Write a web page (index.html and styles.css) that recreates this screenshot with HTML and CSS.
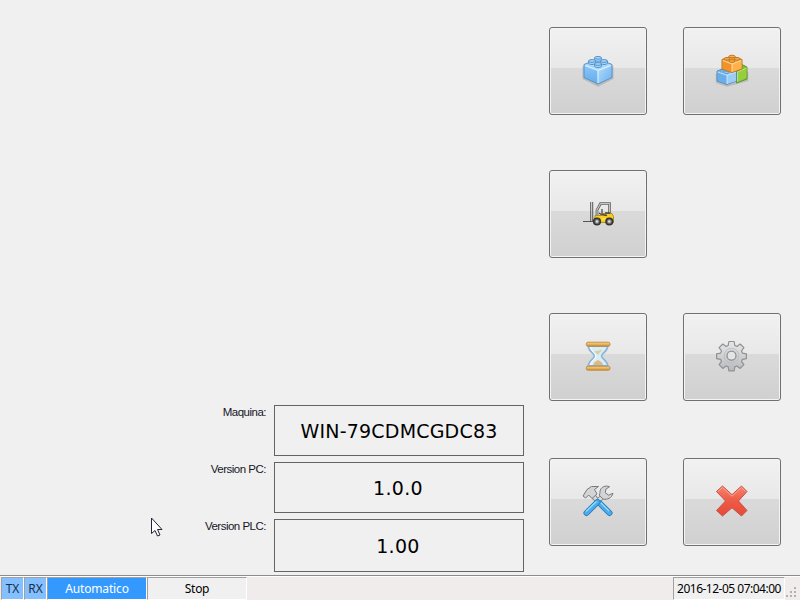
FILE: index.html
```html
<!DOCTYPE html>
<html lang="es">
<head>
<meta charset="utf-8">
<title>Panel</title>
<link rel="stylesheet" href="styles.css">
</head>
<body>
<main class="workspace">
  <section class="info">
    <div class="field"><label>Maquina:</label><div class="value machine"><span>WIN-79CDMCGDC83</span></div></div>
    <div class="field"><label>Version PC:</label><div class="value"><span>1.0.0</span></div></div>
    <div class="field tall"><label>Version PLC:</label><div class="value"><span>1.00</span></div></div>
  </section>
  <nav class="buttons">
    <button aria-label="Pieza">
      <svg viewBox="0 0 36 36">
        <defs>
          <linearGradient id="bl" x1="0" y1="0" x2="0" y2="1"><stop offset="0" stop-color="#8cc8fa"/><stop offset="1" stop-color="#62abea"/></linearGradient>
          <linearGradient id="br" x1="0" y1="0" x2="1" y2="1"><stop offset="0" stop-color="#b4ddff"/><stop offset="1" stop-color="#68b0ee"/></linearGradient>
        </defs>
        <path d="M4 13v12l14 7 14-7V13" fill="none" stroke="#777" stroke-opacity=".3" stroke-width="3"/>
        <path d="M4 11.500l14-5.500 14 5.500-14 5.500z" fill="#a9d7fc"/>
        <path d="M4 11.500l14 5.500v14L4 24.500z" fill="url(#bl)"/>
        <path d="M32 11.500l-14 5.500v14l14-6.500z" fill="url(#br)"/>
        <path d="M4 11.500l14-5.500 14 5.500v13L18 31 4 24.500z" fill="none" stroke="#5a94c4"/>
        <path d="M5 12.500l13 5 13-5M18 17.500v12.500" fill="none" stroke="#e2f4ff" stroke-width="1.100"/>
        <g fill="#a6d5fb" stroke="#4c8dc5" stroke-width=".9">
          <path d="M14.500 4.800v2c0 2 7 2 7 0v-2"/><ellipse cx="18" cy="4.800" rx="3.500" ry="1.400"/>
          <path d="M8.500 8v2c0 2 7 2 7 0V8"/><ellipse cx="12" cy="8" rx="3.500" ry="1.400"/>
          <path d="M20.500 8v2c0 2 7 2 7 0V8"/><ellipse cx="24" cy="8" rx="3.500" ry="1.400"/>
          <path d="M14.500 11v2c0 2 7 2 7 0v-2"/><ellipse cx="18" cy="11" rx="3.500" ry="1.400"/>
        </g>
      </svg>
    </button>
    <button aria-label="Piezas">
      <svg viewBox="0 0 36 36">
        <path d="M3 21v8l10 3.500L33 27v-8" fill="none" stroke="#777" stroke-opacity=".3" stroke-width="2.500"/>
        <path d="M22 16l6-4.500 5 2.500v12L22.500 30z" fill="#80bd32" stroke="#5c8e28" stroke-width=".9"/>
        <path d="M23.500 19l9-4.500v10.500l-9 4z" fill="#94cf3e"/>
        <path d="M23.500 28.500V19l9-4" fill="none" stroke="#c8ea90" stroke-width=".8"/>
        <path d="M3 18l9-3 10.500 3.500V28L13 31.500 3 28z" fill="#75b8ef" stroke="#4c88bd" stroke-width=".9"/>
        <path d="M3.500 18.500l9-3 9.500 3-9 3z" fill="#8dc6f4"/>
        <path d="M22 19l-9 3.200V31l9-3z" fill="#9bcdf7"/>
        <path d="M4 19.500l9 3v8l-9-3z" fill="#69aee9"/>
        <path d="M3.800 19l9.200 3.200 9-3.200M13 22.200V31" fill="none" stroke="#d8efff" stroke-width=".8"/>
        <g fill="#9dd1fa" stroke="#4887c0" stroke-width=".7"><ellipse cx="8" cy="18" rx="2.500" ry="1"/><ellipse cx="12.500" cy="19.600" rx="2.500" ry="1"/></g>
        <path d="M8 6.500L18 3l10 3.500V16l-10 3.500L8 16z" fill="#f3a13b" stroke="#b87528"/>
        <path d="M8.700 7.500L18 11v8l-9.300-3.500z" fill="#f1922b"/>
        <path d="M27.500 7.500L18 11v8l9.500-3.500z" fill="#ffb14c"/>
        <path d="M8.800 7.500L18 11l9.200-3.500M18 11v7.800" fill="none" stroke="#ffe0a5" stroke-width=".9"/>
        <g fill="#ffad43" stroke="#b46b1e" stroke-width=".8"><ellipse cx="18" cy="3.500" rx="3.200" ry="1.300"/><ellipse cx="13" cy="5.800" rx="3" ry="1.300"/><ellipse cx="23" cy="5.800" rx="3" ry="1.300"/><ellipse cx="18" cy="8" rx="3" ry="1.300"/></g>
      </svg>
    </button>
    <button class="lone" aria-label="Carretilla">
      <svg viewBox="0 0 36 36">
        <path d="M3 25.500h10" stroke="#555" stroke-width="1"/>
        <path d="M10.700 6v19M12.700 6v19" stroke="#555" stroke-width="1"/>
        <path d="M17 19v-5l3.500-6.500h9V18" fill="none" stroke="#666" stroke-width="2.700"/>
        <path d="M17 19v-5l3.500-6.500h9V18" fill="none" stroke="#c4c4c4" stroke-width="1.100"/>
        <path d="M22 13v5M19 17l3 2" stroke="#444" stroke-width="1.200"/>
        <path d="M15 19.500h7v-2h10l1.500 3V26.500H14.500z" fill="#f8cc20" stroke="#a3800e" stroke-width=".8"/>
        <path d="M22 18.500l5 1M25 17h5" stroke="#444" stroke-width="1.500"/>
        <path d="M22 23h4" stroke="#fff07a"/>
        <g fill="#777" stroke="#333" stroke-width="1.600"><circle cx="17" cy="25.500" r="3.300"/><circle cx="29.300" cy="25.500" r="3.300"/></g>
        <g fill="#ddd"><circle cx="17" cy="25.500" r="1.300"/><circle cx="29.300" cy="25.500" r="1.300"/></g>
      </svg>
    </button>
    <button aria-label="Tiempos">
      <svg viewBox="0 0 36 36">
        <defs><linearGradient id="gd" x1="0" y1="0" x2="0" y2="1"><stop offset="0" stop-color="#f9d68a"/><stop offset="1" stop-color="#d69436"/></linearGradient></defs>
        <path d="M8.300 7c0 5.500 6.200 7.500 6.200 10s-6.200 4.500-6.200 10h19.400c0-5.500-6.200-7.500-6.200-10s6.200-4.500 6.200-10z" fill="#d8edf8" stroke="#8db6d8" stroke-width="1.800"/>
        <path d="M10.500 8c.5 4.500 5.500 6 5.500 9s-5 4.500-5.500 9" fill="none" stroke="#fff"/>
        <path d="M14 12.500c3-1 5-.5 8-2-.5 2.500-3 3-4 5.500-1-1.500-2.500-2-4-3.500z" fill="#d8cf9d"/>
        <path d="M13.500 26c0-3 2.500-3.500 4.500-5 2 1.500 5 2 5 5z" fill="#e2b878"/>
        <rect x="6.300" y="3.200" width="23.700" height="4" rx="1.700" fill="url(#gd)" stroke="#b67c30" stroke-width=".8"/>
        <rect x="6.300" y="27.200" width="23.700" height="4" rx="1.700" fill="url(#gd)" stroke="#b67c30" stroke-width=".8"/>
      </svg>
    </button>
    <button aria-label="Ajustes">
      <svg viewBox="0 0 36 36">
        <defs><linearGradient id="gr" x1="0" y1="0" x2="0" y2="1"><stop offset="0" stop-color="#e7e7e8"/><stop offset="1" stop-color="#b8babd"/></linearGradient></defs>
        <g transform="translate(17.500 16.700)">
          <path fill="url(#gr)" stroke="#8f9194" stroke-width="1.200" stroke-linejoin="round" d="M-2.600-14.200h5.200l.7 4 2.100.9 3.300-2.400 3.700 3.700-2.400 3.300.9 2.100 4 .7v4.800l-4 .7-.9 2.100 2.400 3.300-3.700 3.700-3.300-2.400-2.100.9-.7 4h-5.200l-.7-4-2.100-.9-3.300 2.400-3.700-3.700 2.400-3.300-.9-2.100-4-.7v-4.800l4-.7.9-2.100-2.400-3.300 3.700-3.700 3.300 2.400 2.100-.9z"/>
          <circle r="7.300" fill="none" stroke="#bcbec0" stroke-width="1"/>
          <circle r="4.500" fill="#e4e4e4" stroke="#8d8f92" stroke-width="1.300"/>
        </g>
      </svg>
    </button>
    <button aria-label="Herramientas">
      <svg viewBox="0 0 36 36">
        <path d="M11.500 10l6 7M23 12l-6 6" stroke="#85888b" stroke-width="5"/>
        <path d="M11.500 10l6 7M23 12l-6 6" stroke="#d7d9da" stroke-width="3.200"/>
        <path d="M3 12l4-6.500 4.500-3H18.500l-4 3 2.500 4.500-5 4.500-3.300-3.500-3 3z" fill="#d2d4d6" stroke="#77797c"/>
        <path d="M29.500 2.700c-4-1.700-9 .3-9.500 4.700-.1 1.500 0 2.500-.7 3.800l4 4c4 .5 8.500-1 9.700-6l-4.300 2-3.400-2.400.5-3.600z" fill="#d2d4d6" stroke="#77797c"/>
        <path d="M20 19.500l9.500 9.500" stroke="#2878b4" stroke-width="6" stroke-linecap="round"/>
        <path d="M20 19.500l9.500 9.500" stroke="#49aceb" stroke-width="4.400" stroke-linecap="round"/>
        <path d="M20.500 18.500l8.500 8.500" stroke="#9bdcff" stroke-width="1.200"/>
        <path d="M6.500 29L17.500 18" stroke="#2878b4" stroke-width="6" stroke-linecap="round"/>
        <path d="M6.500 29L17.500 18" stroke="#49aceb" stroke-width="4.400" stroke-linecap="round"/>
        <path d="M6 27.500L16.500 17.500" stroke="#9bdcff" stroke-width="1.200"/>
      </svg>
    </button>
    <button aria-label="Salir">
      <svg viewBox="0 0 36 36">
        <defs><linearGradient id="rd" x1="0" y1="0" x2="0" y2="1"><stop offset="0" stop-color="#f8826e"/><stop offset=".5" stop-color="#ee5a46"/><stop offset="1" stop-color="#e54a37"/></linearGradient></defs>
        <path d="M8.500 2l9.500 8.700L27.500 2l5.500 5.500-8.500 9.500 8.500 9.500-5.500 5.500L18 23.800 8.500 32 2.500 26.500 11.500 17 2.500 7.500z" fill="url(#rd)" stroke="#c0564a" stroke-width="1" stroke-linejoin="round"/>
        <path d="M4 7.500l4.500-4 9.500 8.700 9.500-8.700 4 4" fill="none" stroke="#ffaf9d" stroke-width=".8"/>
      </svg>
    </button>
  </nav>
</main>
<footer class="status">
  <div class="cell tx"><span>TX</span></div>
  <div class="cell rx"><span>RX</span></div>
  <div class="cell mode"><span>Automatico</span></div>
  <div class="cell state"><span>Stop</span></div>
  <div class="spring"></div>
  <div class="cell clock"><span>2016-12-05 07:04:00</span></div>
  <svg class="grip" viewBox="0 0 12 12"><path d="M8 0h2v2H8zM4 4h2v2H4zM8 4h2v2H8zM0 8h2v2H0zM4 8h2v2H4zM8 8h2v2H8z" fill="#b3b1b1"/></svg>
</footer>
<svg class="cursor" viewBox="0 0 13 20"><path d="M1.500 1v15.500l3.500-3 2.500 5.500 2.500-1-2.500-5.500h4.500z" fill="#fff" stroke="#222435"/></svg>
</body>
</html>
```
FILE: styles.css
```css
* { box-sizing: border-box; }
body {
  margin: 0;
  width: 800px;
  height: 600px;
  overflow: hidden;
  display: flex;
  flex-direction: column;
  background: #f0f0f0;
  color: #000;
  font-family: "Noto Sans", sans-serif;
}
.workspace {
  flex: 1;
  display: flex;
  justify-content: space-between;
  padding: 27px 19px 3px 0;
}
.info {
  width: 524px;
  display: flex;
  flex-direction: column;
  justify-content: flex-end;
  gap: 6px;
}
.field {
  display: flex;
  justify-content: flex-end;
  gap: 8px;
  height: 51px;
}
.field.tall { height: 53px; }
.field label {
  font: 11.5px/14px "Liberation Sans", sans-serif;
  letter-spacing: -0.5px;
  color: #16161e;
}
.value {
  width: 250px;
  border: 1px solid #646464;
  display: flex;
  align-items: center;
  justify-content: center;
  font: 19px/24px "DejaVu Sans", sans-serif;
  letter-spacing: 0.3px;
  padding-right: 2px;
}
.value.machine { letter-spacing: 0.2px; padding-right: 0; }
.buttons {
  display: grid;
  grid-template-columns: 98px 98px;
  grid-template-rows: 88px 88px 88px 90px;
  gap: 55px 36px;
  align-content: start;
  align-items: end;
}
.lone { grid-column: 1 / 2; }
.lone + button { grid-column: 1; }
.buttons button {
  width: 98px;
  height: 88px;
  padding: 0;
  display: flex;
  align-items: center;
  justify-content: center;
  border: 1px solid #707070;
  border-radius: 3px;
  background: linear-gradient(#f1f1f1, #e8e8e8 47%, #dadada 47%, #d0d0d0);
  box-shadow: inset 0 0 0 1px #f4f4f4;
}
.buttons svg { width: 36px; height: 36px; fill: none; }
.status {
  height: 25px;
  border-top: 1px solid #8c8c8c;
  box-shadow: inset 0 1px #fff;
  background: #f0eceb;
  display: flex;
  padding: 1px 2px 0 1px;
  font-size: 12px;
  line-height: 22px;
}
.cell {
  height: 23px;
  border: 1px solid #a0a0a0;
  border-right-color: #fff;
  border-bottom-color: #fff;
  text-align: center;
  white-space: nowrap;
  background: #f0f0f0;
}
.tx, .rx { width: 23px; background: #84bfff; color: #15304c; }
.mode { width: 100px; background: #3399ff; color: #fff; letter-spacing: -0.15px; }
.state { width: 100px; letter-spacing: -0.3px; }
.spring { flex: 1; }
.clock { width: 112px; letter-spacing: -0.5px; }
.grip { width: 12px; height: 12px; margin: 10px 0 0 1px; }
.cursor {
  position: absolute;
  left: 150px;
  top: 517px;
  width: 13px;
  height: 20px;
}
```
